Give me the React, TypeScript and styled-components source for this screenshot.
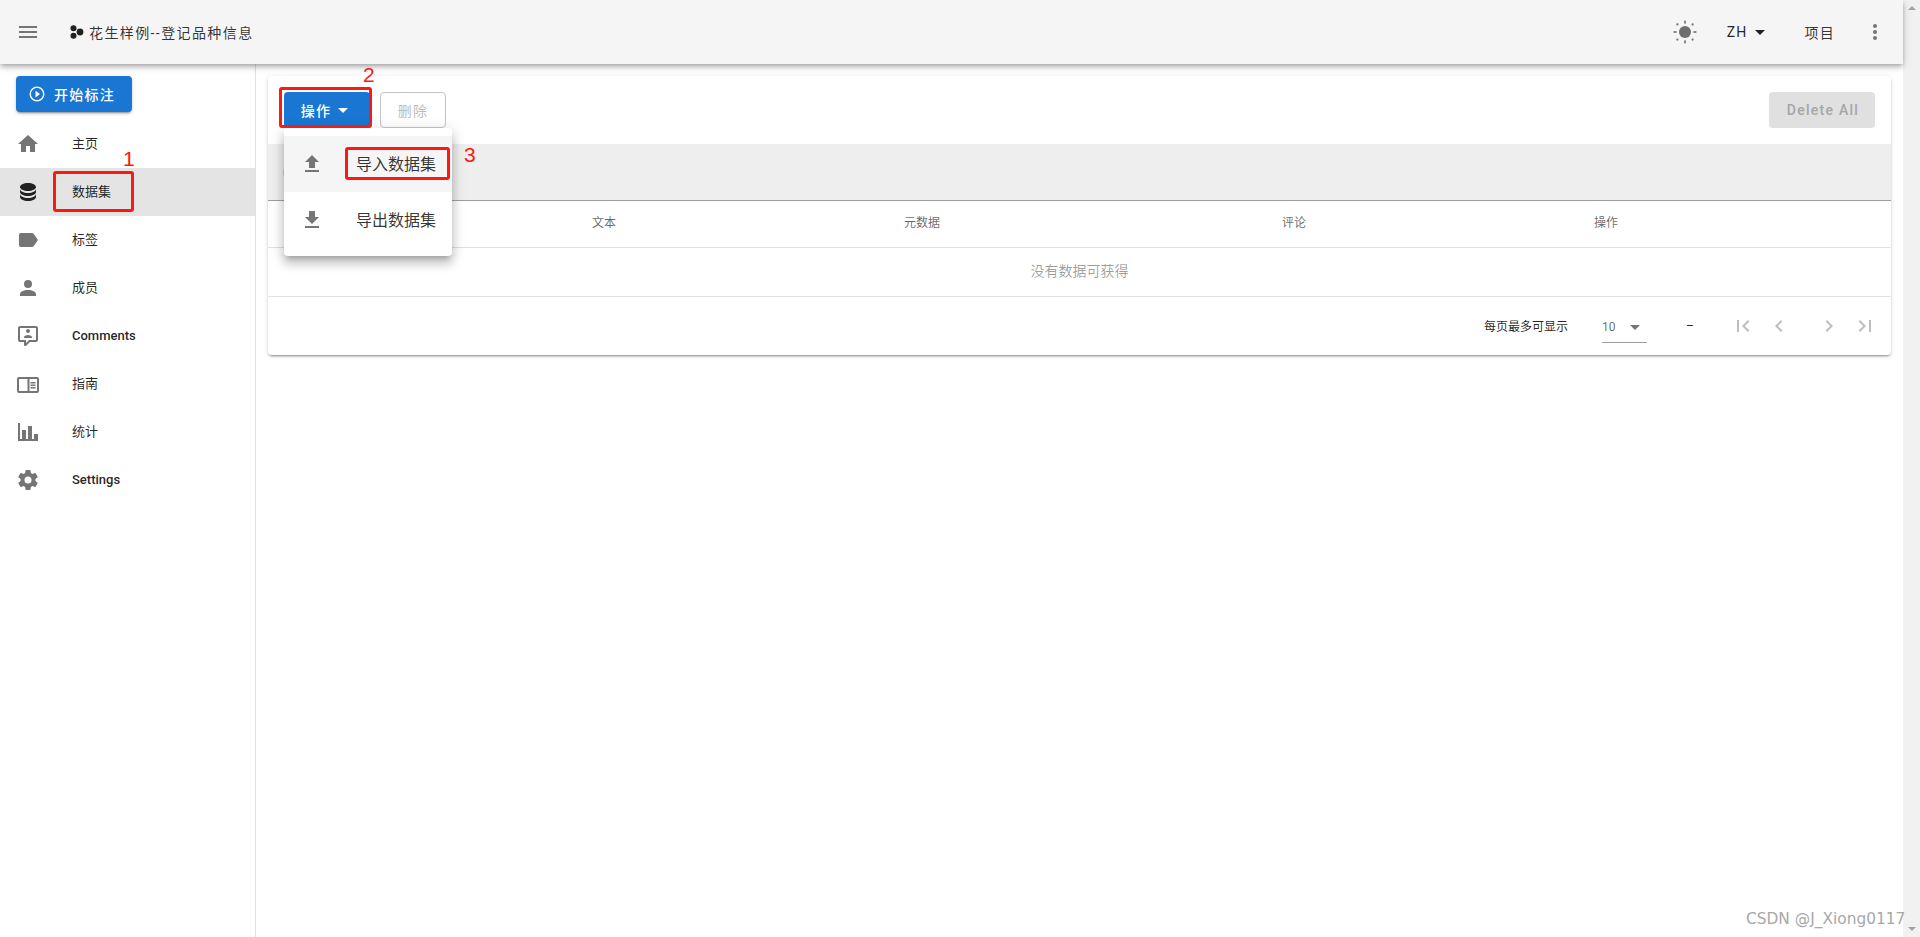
import React from "react"
import styled, { createGlobalStyle } from "styled-components"

const CJK = `Roboto, "Noto Sans CJK SC", sans-serif`

const GlobalStyle = createGlobalStyle`
    html, body {
        margin: 0;
        padding: 0;
        height: 100%;
        overflow: hidden;
        background: #fff;
    }
    body {
        font-family: ${CJK};
    }
    * {
        box-sizing: border-box;
    }
`

const mdi = {
    menu: "M3,6H21V8H3V6M3,11H21V13H3V11M3,16H21V18H3V16Z",
    home: "M10,20V14H14V20H19V12H22L12,3L2,12H5V20H10Z",
    database: "M12,3C7.58,3 4,4.79 4,7C4,9.21 7.58,11 12,11C16.42,11 20,9.21 20,7C20,4.79 16.42,3 12,3M4,9V12C4,14.21 7.58,16 12,16C16.42,16 20,14.21 20,12V9C20,11.21 16.42,13 12,13C7.58,13 4,11.21 4,9M4,14V17C4,19.21 7.58,21 12,21C16.42,21 20,19.21 20,17V14C20,16.21 16.42,18 12,18C7.58,18 4,16.21 4,14Z",
    label: "M17.63,5.84C17.27,5.33 16.67,5 16,5H5A2,2 0 0,0 3,7V17A2,2 0 0,0 5,19H16C16.67,19 17.27,18.66 17.63,18.15L22,12L17.63,5.84Z",
    account: "M12,4A4,4 0 0,1 16,8A4,4 0 0,1 12,12A4,4 0 0,1 8,8A4,4 0 0,1 12,4M12,14C16.42,14 20,15.79 20,18V20H4V18C4,15.79 7.58,14 12,14Z",
    comment: "M9,22A1,1 0 0,1 8,21V18H4A2,2 0 0,1 2,16V4C2,2.89 2.9,2 4,2H20A2,2 0 0,1 22,4V16A2,2 0 0,1 20,18H13.9L10.2,21.71C10,21.9 9.75,22 9.5,22V22H9M10,16V19.08L13.08,16H20V4H4V16H10M16,14H8V13C8,11.67 10.67,11 12,11C13.33,11 16,11.67 16,13V14M12,5A2,2 0 0,1 14,7A2,2 0 0,1 12,9A2,2 0 0,1 10,7A2,2 0 0,1 12,5Z",
    book: "M3,5H21A2,2 0 0,1 23,7V19A2,2 0 0,1 21,21H3A2,2 0 0,1 1,19V7A2,2 0 0,1 3,5M3,7V19H11.5V7H3M13.5,7V19H21V7H13.5M14.5,10H19.5V11.5H14.5V10M14.5,12.5H19.5V14H14.5V12.5M14.5,15H19.5V16.5H14.5V15Z",
    chart: "M22,21H2V3H4V19H6V10H10V19H12V6H16V19H18V14H22V21Z",
    cog: "M12,15.5A3.5,3.5 0 0,1 8.5,12A3.5,3.5 0 0,1 12,8.5A3.5,3.5 0 0,1 15.5,12A3.5,3.5 0 0,1 12,15.5M19.43,12.97C19.47,12.65 19.5,12.33 19.5,12C19.5,11.67 19.47,11.34 19.43,11L21.54,9.37C21.73,9.22 21.78,8.95 21.66,8.73L19.66,5.27C19.54,5.05 19.27,4.96 19.05,5.05L16.56,6.05C16.04,5.66 15.5,5.32 14.87,5.07L14.5,2.42C14.46,2.18 14.25,2 14,2H10C9.75,2 9.54,2.18 9.5,2.42L9.13,5.07C8.5,5.32 7.96,5.66 7.44,6.05L4.95,5.05C4.73,4.96 4.46,5.05 4.34,5.27L2.34,8.73C2.21,8.95 2.27,9.22 2.46,9.37L4.57,11C4.53,11.34 4.5,11.67 4.5,12C4.5,12.33 4.53,12.65 4.57,12.97L2.46,14.63C2.27,14.78 2.21,15.05 2.34,15.27L4.34,18.73C4.46,18.95 4.73,19.03 4.95,18.95L7.44,17.94C7.96,18.34 8.5,18.68 9.13,18.93L9.5,21.58C9.54,21.82 9.75,22 10,22H14C14.25,22 14.46,21.82 14.5,21.58L14.87,18.93C15.5,18.67 16.04,18.34 16.56,17.94L19.05,18.95C19.27,19.03 19.54,18.95 19.66,18.73L21.66,15.27C21.78,15.05 21.73,14.78 21.54,14.63L19.43,12.97Z",
    play: "M10,16.5L16,12L10,7.5V16.5M12,2A10,10 0 0,0 2,12A10,10 0 0,0 12,22A10,10 0 0,0 22,12A10,10 0 0,0 12,2M12,20C7.59,20 4,16.41 4,12C4,7.59 7.59,4 12,4C16.41,4 20,7.59 20,12C20,16.41 16.41,20 12,20Z",
    menuDown: "M7,10L12,15L17,10H7Z",
    upload: "M9,16V10H5L12,3L19,10H15V16H9M5,20V18H19V20H5Z",
    download: "M5,20H19V18H5M19,9H15V3H9V9H5L12,16L19,9Z",
    dots: "M12,16A2,2 0 0,1 14,18A2,2 0 0,1 12,20A2,2 0 0,1 10,18A2,2 0 0,1 12,16M12,10A2,2 0 0,1 14,12A2,2 0 0,1 12,14A2,2 0 0,1 10,12A2,2 0 0,1 12,10M12,4A2,2 0 0,1 14,6A2,2 0 0,1 12,8A2,2 0 0,1 10,6A2,2 0 0,1 12,4Z",
    first: "M18.41,16.59L13.82,12L18.41,7.41L17,6L11,12L17,18L18.41,16.59M6,6H8V18H6V6Z",
    prev: "M15.41,16.58L10.83,12L15.41,7.41L14,6L8,12L14,18L15.41,16.58Z",
    next: "M8.59,16.58L13.17,12L8.59,7.41L10,6L16,12L10,18L8.59,16.58Z",
    last: "M5.59,7.41L10.18,12L5.59,16.59L7,18L13,12L7,6L5.59,7.41M16,6H18V18H16V6Z",
}

const Icon = ({ d, size = 24, color = "#757575" }: { d: string; size?: number; color?: string }) => (
    <svg width={size} height={size} viewBox="0 0 24 24" fill={color} style={{ flex: "none", display: "block" }}>
        <path d={d} />
    </svg>
)

const Logo = () => (
    <svg width={14} height={14} viewBox="0 0 14 14" fill="#212121" style={{ flex: "none", display: "block" }}>
        <circle cx="3.5" cy="3.2" r="3" />
        <circle cx="3.5" cy="10.8" r="3" />
        <circle cx="10" cy="7" r="3.4" />
    </svg>
)

const Sun = () => (
    <svg width={24} height={24} viewBox="0 0 24 24" fill="#6e6e6e" style={{ flex: "none", display: "block" }}>
        <circle cx="12" cy="12" r="6" />
        <rect x="11.2" y="0.6" width="1.6" height="3" />
        <rect x="11.2" y="20.4" width="1.6" height="3" />
        <rect x="0.6" y="11.2" width="3" height="1.6" />
        <rect x="20.4" y="11.2" width="3" height="1.6" />
        <circle cx="4.4" cy="4.4" r="1.1" />
        <circle cx="19.6" cy="4.4" r="1.1" />
        <circle cx="4.4" cy="19.6" r="1.1" />
        <circle cx="19.6" cy="19.6" r="1.1" />
    </svg>
)

const navItems = [
    { icon: mdi.home, label: "主页" },
    { icon: mdi.database, label: "数据集", active: true },
    { icon: mdi.label, label: "标签" },
    { icon: mdi.account, label: "成员" },
    { icon: mdi.comment, label: "Comments", latin: true },
    { icon: mdi.book, label: "指南" },
    { icon: mdi.chart, label: "统计" },
    { icon: mdi.cog, label: "Settings", latin: true },
]

const App = () => (
    <Frame>
        <GlobalStyle />
        <Page>
            <Header>
                <Icon d={mdi.menu} />
                <Brand>
                    <Logo />
                    <Title>花生样例--登记品种信息</Title>
                </Brand>
                <HeaderRight>
                    <SunSlot><Sun /></SunSlot>
                    <LangButton>ZH<Icon d={mdi.menuDown} color="#212121" /></LangButton>
                    <ProjectLink>项目</ProjectLink>
                    <Icon d={mdi.dots} />
                </HeaderRight>
            </Header>
            <Body>
                <Sidebar>
                    <StartButton>
                        <Icon d={mdi.play} size={18} color="#fff" />
                        开始标注
                    </StartButton>
                    <NavList>
                        {navItems.map(item => (
                            <NavItem key={item.label} $active={item.active}>
                                <Icon d={item.icon} color={item.active ? "#212121" : "#757575"} />
                                <NavLabel $latin={item.latin}>{item.label}</NavLabel>
                            </NavItem>
                        ))}
                    </NavList>
                </Sidebar>
                <Main>
                    <Card>
                        <Actions>
                            <PrimaryButton>
                                操作
                                <Icon d={mdi.menuDown} color="#fff" />
                            </PrimaryButton>
                            <OutlineButton>删除</OutlineButton>
                            <Spacer />
                            <DisabledButton>Delete All</DisabledButton>
                        </Actions>
                        <GreyBar>0 已选择</GreyBar>
                        <HeadRow>
                            <span />
                            <span>文本</span>
                            <span>元数据</span>
                            <span>评论</span>
                            <span>操作</span>
                        </HeadRow>
                        <EmptyRow>没有数据可获得</EmptyRow>
                        <Pager>
                            <PagerLabel>每页最多可显示</PagerLabel>
                            <PageSelect>
                                10
                                <Icon d={mdi.menuDown} color="#757575" />
                            </PageSelect>
                            <PageRange>–</PageRange>
                            <PagerIcons>
                                <Icon d={mdi.first} color="#bdbdbd" />
                                <Icon d={mdi.prev} color="#bdbdbd" />
                                <PagerGap />
                                <Icon d={mdi.next} color="#bdbdbd" />
                                <Icon d={mdi.last} color="#bdbdbd" />
                            </PagerIcons>
                        </Pager>
                    </Card>
                </Main>
            </Body>
        </Page>
        <Scrollbar>
            <ArrowUp />
            <ArrowDown />
        </Scrollbar>

        <Menu>
            <MenuItem $hover>
                <Icon d={mdi.upload} />
                <MenuText>导入数据集</MenuText>
            </MenuItem>
            <MenuItem>
                <Icon d={mdi.download} />
                <MenuText>导出数据集</MenuText>
            </MenuItem>
        </Menu>

        <Mark style={{ left: 53, top: 171, width: 81, height: 41 }} />
        <Mark style={{ left: 279, top: 87, width: 93, height: 41 }} />
        <Mark style={{ left: 345, top: 147, width: 105, height: 33 }} />
        <MarkNumber style={{ left: 123, top: 147 }}>1</MarkNumber>
        <MarkNumber style={{ left: 363, top: 63 }}>2</MarkNumber>
        <MarkNumber style={{ left: 464, top: 143 }}>3</MarkNumber>
        <Watermark>CSDN @J_Xiong0117</Watermark>
    </Frame>
)

export default App

const Frame = styled.div`
    position: relative;
    display: flex;
    width: 1920px;
    height: 937px;
    overflow: hidden;
`

const Page = styled.div`
    flex: 1;
    min-width: 0;
    display: flex;
    flex-direction: column;
`

const Header = styled.header`
    position: relative;
    z-index: 2;
    flex: none;
    height: 64px;
    display: flex;
    align-items: center;
    padding: 0 16px;
    background: #f5f5f5;
    box-shadow: 0 2px 4px -1px rgba(0, 0, 0, .2), 0 4px 5px 0 rgba(0, 0, 0, .14), 0 1px 10px 0 rgba(0, 0, 0, .12);
`

const Brand = styled.div`
    display: flex;
    align-items: center;
    margin-left: 30px;
    gap: 5px;
`

const Title = styled.span`
    font-size: 14px;
    letter-spacing: 1.4px;
    font-variant-ligatures: none;
    color: rgba(0, 0, 0, .8);
`

const HeaderRight = styled.div`
    margin-left: auto;
    display: flex;
    align-items: center;
`

const SunSlot = styled.div`
    margin-right: 30px;
`

const LangButton = styled.div`
    display: flex;
    align-items: center;
    font-size: 14px;
    letter-spacing: 1.25px;
    color: rgba(0, 0, 0, .87);
    margin-right: 33px;
`

const ProjectLink = styled.div`
    font-size: 14px;
    color: rgba(0, 0, 0, .8);
    letter-spacing: 1.25px;
    margin-right: 28px;
`

const Body = styled.div`
    flex: 1;
    min-height: 0;
    display: flex;
`

const Sidebar = styled.aside`
    flex: none;
    width: 256px;
    border-right: 1px solid #e0e0e0;
    padding-top: 12px;
`

const StartButton = styled.div`
    display: flex;
    align-items: center;
    gap: 8px;
    width: 116px;
    height: 36px;
    margin-left: 16px;
    padding-left: 12px;
    border-radius: 4px;
    background: #1976d2;
    color: #fff;
    font-size: 14px;
    font-weight: 500;
    letter-spacing: 1.25px;
    box-shadow: 0 3px 1px -2px rgba(0, 0, 0, .2), 0 2px 2px 0 rgba(0, 0, 0, .14), 0 1px 5px 0 rgba(0, 0, 0, .12);
`

const NavList = styled.nav`
    margin-top: 8px;
`

const NavItem = styled.div<{ $active?: boolean }>`
    display: flex;
    align-items: center;
    height: 48px;
    padding-left: 16px;
    background: ${props => props.$active ? "#e4e4e4" : "transparent"};
`

const NavLabel = styled.span<{ $latin?: boolean }>`
    margin-left: 32px;
    margin-bottom: ${props => props.$latin ? "2px" : "4px"};
    font-size: 13px;
    font-weight: ${props => props.$latin ? 500 : 400};
    color: rgba(0, 0, 0, .87);
`

const Main = styled.main`
    flex: 1;
    min-width: 0;
    padding: 12px;
`

const Card = styled.section`
    border-radius: 4px;
    background: #fff;
    box-shadow: 0 3px 1px -2px rgba(0, 0, 0, .2), 0 2px 2px 0 rgba(0, 0, 0, .14), 0 1px 5px 0 rgba(0, 0, 0, .12);
`

const Actions = styled.div`
    display: flex;
    align-items: center;
    gap: 10px;
    height: 68px;
    padding: 0 16px;
`

const Spacer = styled.div`
    flex: 1;
`

const PrimaryButton = styled.div`
    display: flex;
    align-items: center;
    justify-content: center;
    width: 86px;
    height: 36px;
    padding-left: 2px;
    border-radius: 4px;
    background: #1976d2;
    color: #fff;
    font-size: 14px;
    font-weight: 500;
    letter-spacing: 1.25px;
`

const OutlineButton = styled.div`
    display: flex;
    align-items: center;
    justify-content: center;
    width: 66px;
    height: 36px;
    border: 1px solid #c4c4c4;
    border-radius: 4px;
    color: #bdbdbd;
    font-size: 14px;
    letter-spacing: 1.25px;
`

const DisabledButton = styled.div`
    display: flex;
    align-items: center;
    justify-content: center;
    width: 106px;
    height: 36px;
    padding-left: 2px;
    border-radius: 4px;
    background: #e0e0e0;
    color: #a6a6a6;
    font-size: 14px;
    font-weight: 500;
    letter-spacing: 1.25px;
`

const GreyBar = styled.div`
    display: flex;
    align-items: center;
    height: 57px;
    padding-left: 15px;
    background: #eeeeee;
    border-bottom: 1px solid #9e9e9e;
    font-size: 14px;
    color: rgba(0, 0, 0, .6);
`

const HeadRow = styled.div`
    display: grid;
    grid-template-columns: 324px 312px 378px 312px 1fr;
    align-items: center;
    height: 47px;
    padding-bottom: 6px;
    border-bottom: 1px solid #e0e0e0;
    font-size: 12px;
    color: rgba(0, 0, 0, .6);
`

const EmptyRow = styled.div`
    display: flex;
    align-items: center;
    justify-content: center;
    height: 49px;
    padding-bottom: 4px;
    border-bottom: 1px solid #e0e0e0;
    font-size: 14px;
    color: rgba(0, 0, 0, .38);
`

const Pager = styled.div`
    display: flex;
    align-items: center;
    height: 58px;
    padding-left: 1216px;
    font-size: 12px;
    color: rgba(0, 0, 0, .87);
`

const PagerLabel = styled.span`
    width: 118px;
    margin-bottom: 2px;
`

const PageSelect = styled.div`
    display: flex;
    align-items: center;
    justify-content: space-between;
    width: 45px;
    height: 32px;
    margin-top: 2px;
    border-bottom: 1px solid #9e9e9e;
    color: rgba(0, 0, 0, .6);
`

const PageRange = styled.span`
    margin-left: 39px;
    width: 45px;
`

const PagerIcons = styled.div`
    display: flex;
    align-items: center;
    gap: 12px;
`

const PagerGap = styled.div`
    width: 2px;
`

const Scrollbar = styled.div`
    flex: none;
    width: 17px;
    display: flex;
    flex-direction: column;
    justify-content: space-between;
    align-items: center;
    padding: 6px 0;
    background: #f1f1f1;
`

const ArrowUp = styled.div`
    width: 0;
    height: 0;
    border-left: 4px solid transparent;
    border-right: 4px solid transparent;
    border-bottom: 4px solid #a3a3a3;
`

const ArrowDown = styled(ArrowUp)`
    border-bottom: 0;
    border-top: 4px solid #a3a3a3;
`

const Menu = styled.div`
    position: absolute;
    z-index: 3;
    left: 284px;
    top: 128px;
    width: 168px;
    padding: 8px 0;
    border-radius: 4px;
    background: #fff;
    box-shadow: 0 5px 5px -3px rgba(0, 0, 0, .2), 0 8px 10px 1px rgba(0, 0, 0, .14), 0 3px 14px 2px rgba(0, 0, 0, .12);
`

const MenuItem = styled.div<{ $hover?: boolean }>`
    display: flex;
    align-items: center;
    height: 56px;
    padding-left: 16px;
    background: ${props => props.$hover ? "#f5f5f5" : "transparent"};
`

const MenuText = styled.span`
    margin-left: 32px;
    margin-bottom: 2px;
    font-size: 16px;
    color: rgba(0, 0, 0, .8);
`

const Mark = styled.div`
    position: absolute;
    z-index: 4;
    border: 3px solid #fb1a12;
    border-radius: 3px;
`

const MarkNumber = styled.div`
    position: absolute;
    z-index: 4;
    font-family: "Liberation Sans", sans-serif;
    font-size: 21px;
    line-height: 24px;
    color: #fb1a12;
`

const Watermark = styled.div`
    position: absolute;
    z-index: 4;
    left: 1746px;
    top: 909px;
    font-family: "DejaVu Sans", sans-serif;
    font-size: 15.4px;
    line-height: 20px;
    color: #a8a8a8;
`
